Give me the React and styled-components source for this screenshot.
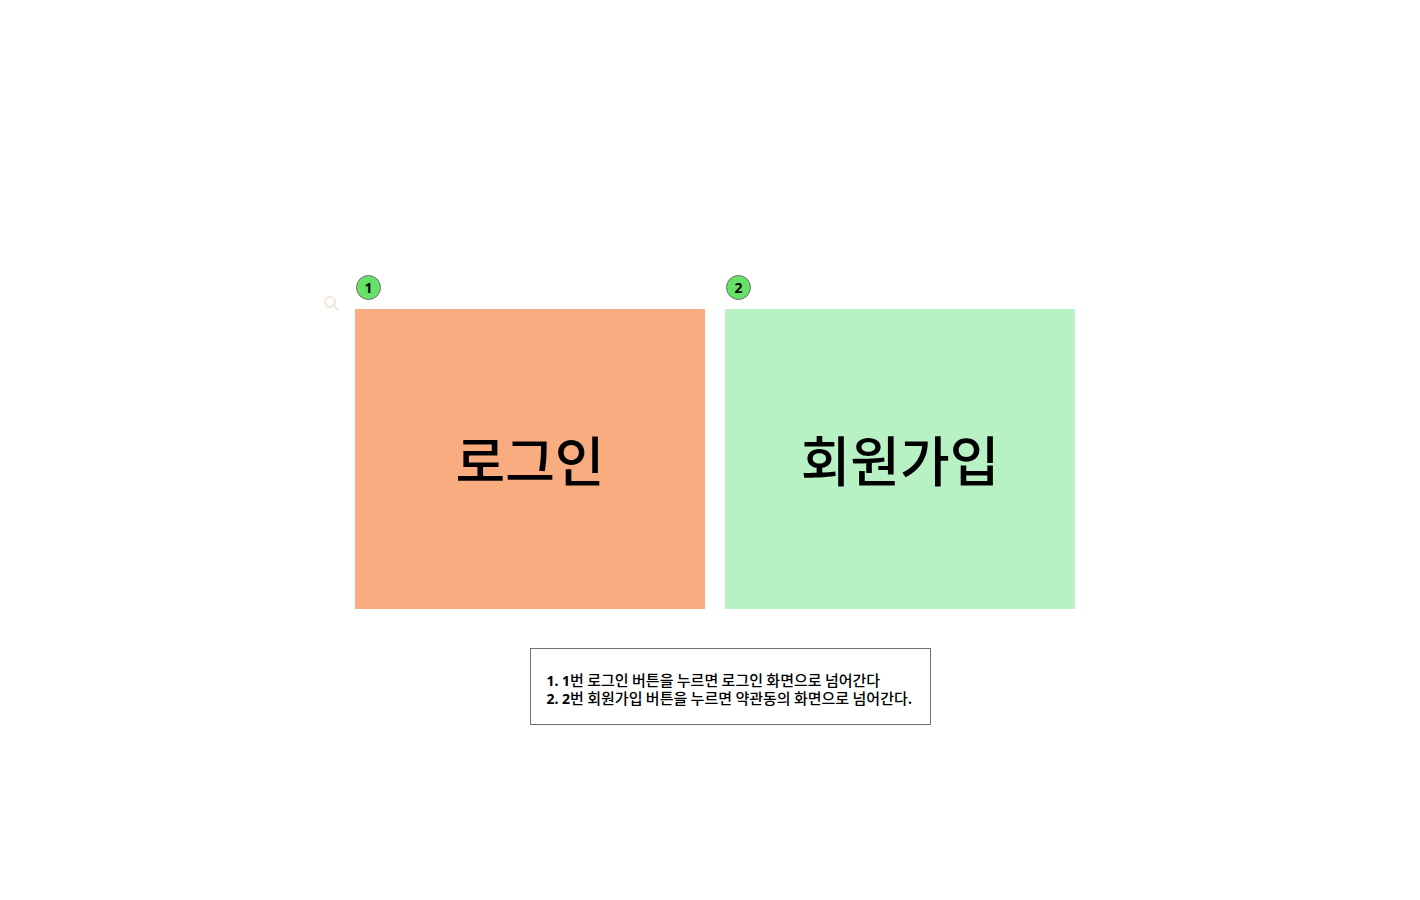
import React from "react";
import styled, { createGlobalStyle } from "styled-components";

const GlobalStyle = createGlobalStyle`
  *, *::before, *::after { box-sizing: border-box; }
  body {
    margin: 0;
    background: #ffffff;
    color: #000000;
    font-family: "Noto Sans CJK KR", sans-serif;
    font-weight: 500;
  }
`;

const Page = styled.main`
  display: flex;
  justify-content: center;
  padding: 275px 22px 40px 0;
`;

const SearchButton = styled.button`
  flex: none;
  align-self: flex-start;
  width: 16px;
  height: 16px;
  margin: 20px 16px 0 0;
  padding: 0;
  border: 0;
  background: none;
  color: #f1e6d8;
  cursor: pointer;

  svg { display: block; }
`;

const Content = styled.div`
  flex: 0 1 720px;
  display: flex;
  flex-direction: column;
  gap: 39px;
`;

const Choices = styled.div`
  display: grid;
  grid-template-columns: 1fr 1fr;
  gap: 20px;
`;

const Choice = styled.section`
  display: flex;
  flex-direction: column;
  gap: 9px;
`;

const Badge = styled.span`
  display: flex;
  align-items: center;
  justify-content: center;
  width: 25px;
  height: 25px;
  margin-left: 1px;
  border: 1px solid #707070;
  border-radius: 50%;
  background: #65e267;
  font: 700 14px/23px "Noto Sans", sans-serif;
`;

const ChoiceButton = styled.button`
  height: 300px;
  padding: 0;
  border: 0;
  background: ${({ $color }) => $color};
  color: inherit;
  font-family: inherit;
  font-size: 54px;
  font-weight: 500;
  line-height: 60px;
  cursor: pointer;
`;

const Note = styled.div`
  align-self: center;
  width: 401px;
  max-width: 100%;
  margin-left: 30px;
  padding: 22px 0 17px 16px;
  border: 1px solid #707070;
  font-size: 15px;
  line-height: 18px;
  white-space: nowrap;
`;

const NoteLine = styled.p`
  margin: 0;
`;

const Digits = styled.strong`
  font-family: "Noto Sans", sans-serif;
  font-size: 14px;
  font-weight: 700;
  line-height: 14px;
`;

const choices = [
  { number: 1, label: "로그인", color: "#f9ac7f" },
  { number: 2, label: "회원가입", color: "#b8f1c4" },
];

const notes = [
  { lead: "1. 1", text: "번 로그인 버튼을 누르면 로그인 화면으로 넘어간다" },
  { lead: "2. 2", text: "번 회원가입 버튼을 누르면 약관동의 화면으로 넘어간다." },
];

export default function App() {
  return (
    <>
      <GlobalStyle />
      <Page>
        <SearchButton type="button" aria-label="검색">
          <svg width="16" height="16" viewBox="0 0 16 16" fill="none" stroke="currentColor" strokeWidth="2">
            <circle cx="7" cy="7" r="5" />
            <path d="M10.6 10.6 L15 15" />
          </svg>
        </SearchButton>
        <Content>
          <Choices>
            {choices.map(({ number, label, color }) => (
              <Choice key={number}>
                <Badge>{number}</Badge>
                <ChoiceButton type="button" $color={color}>{label}</ChoiceButton>
              </Choice>
            ))}
          </Choices>
          <Note>
            {notes.map(({ lead, text }) => (
              <NoteLine key={lead}>
                <Digits>{lead}</Digits>
                {text}
              </NoteLine>
            ))}
          </Note>
        </Content>
      </Page>
    </>
  );
}
